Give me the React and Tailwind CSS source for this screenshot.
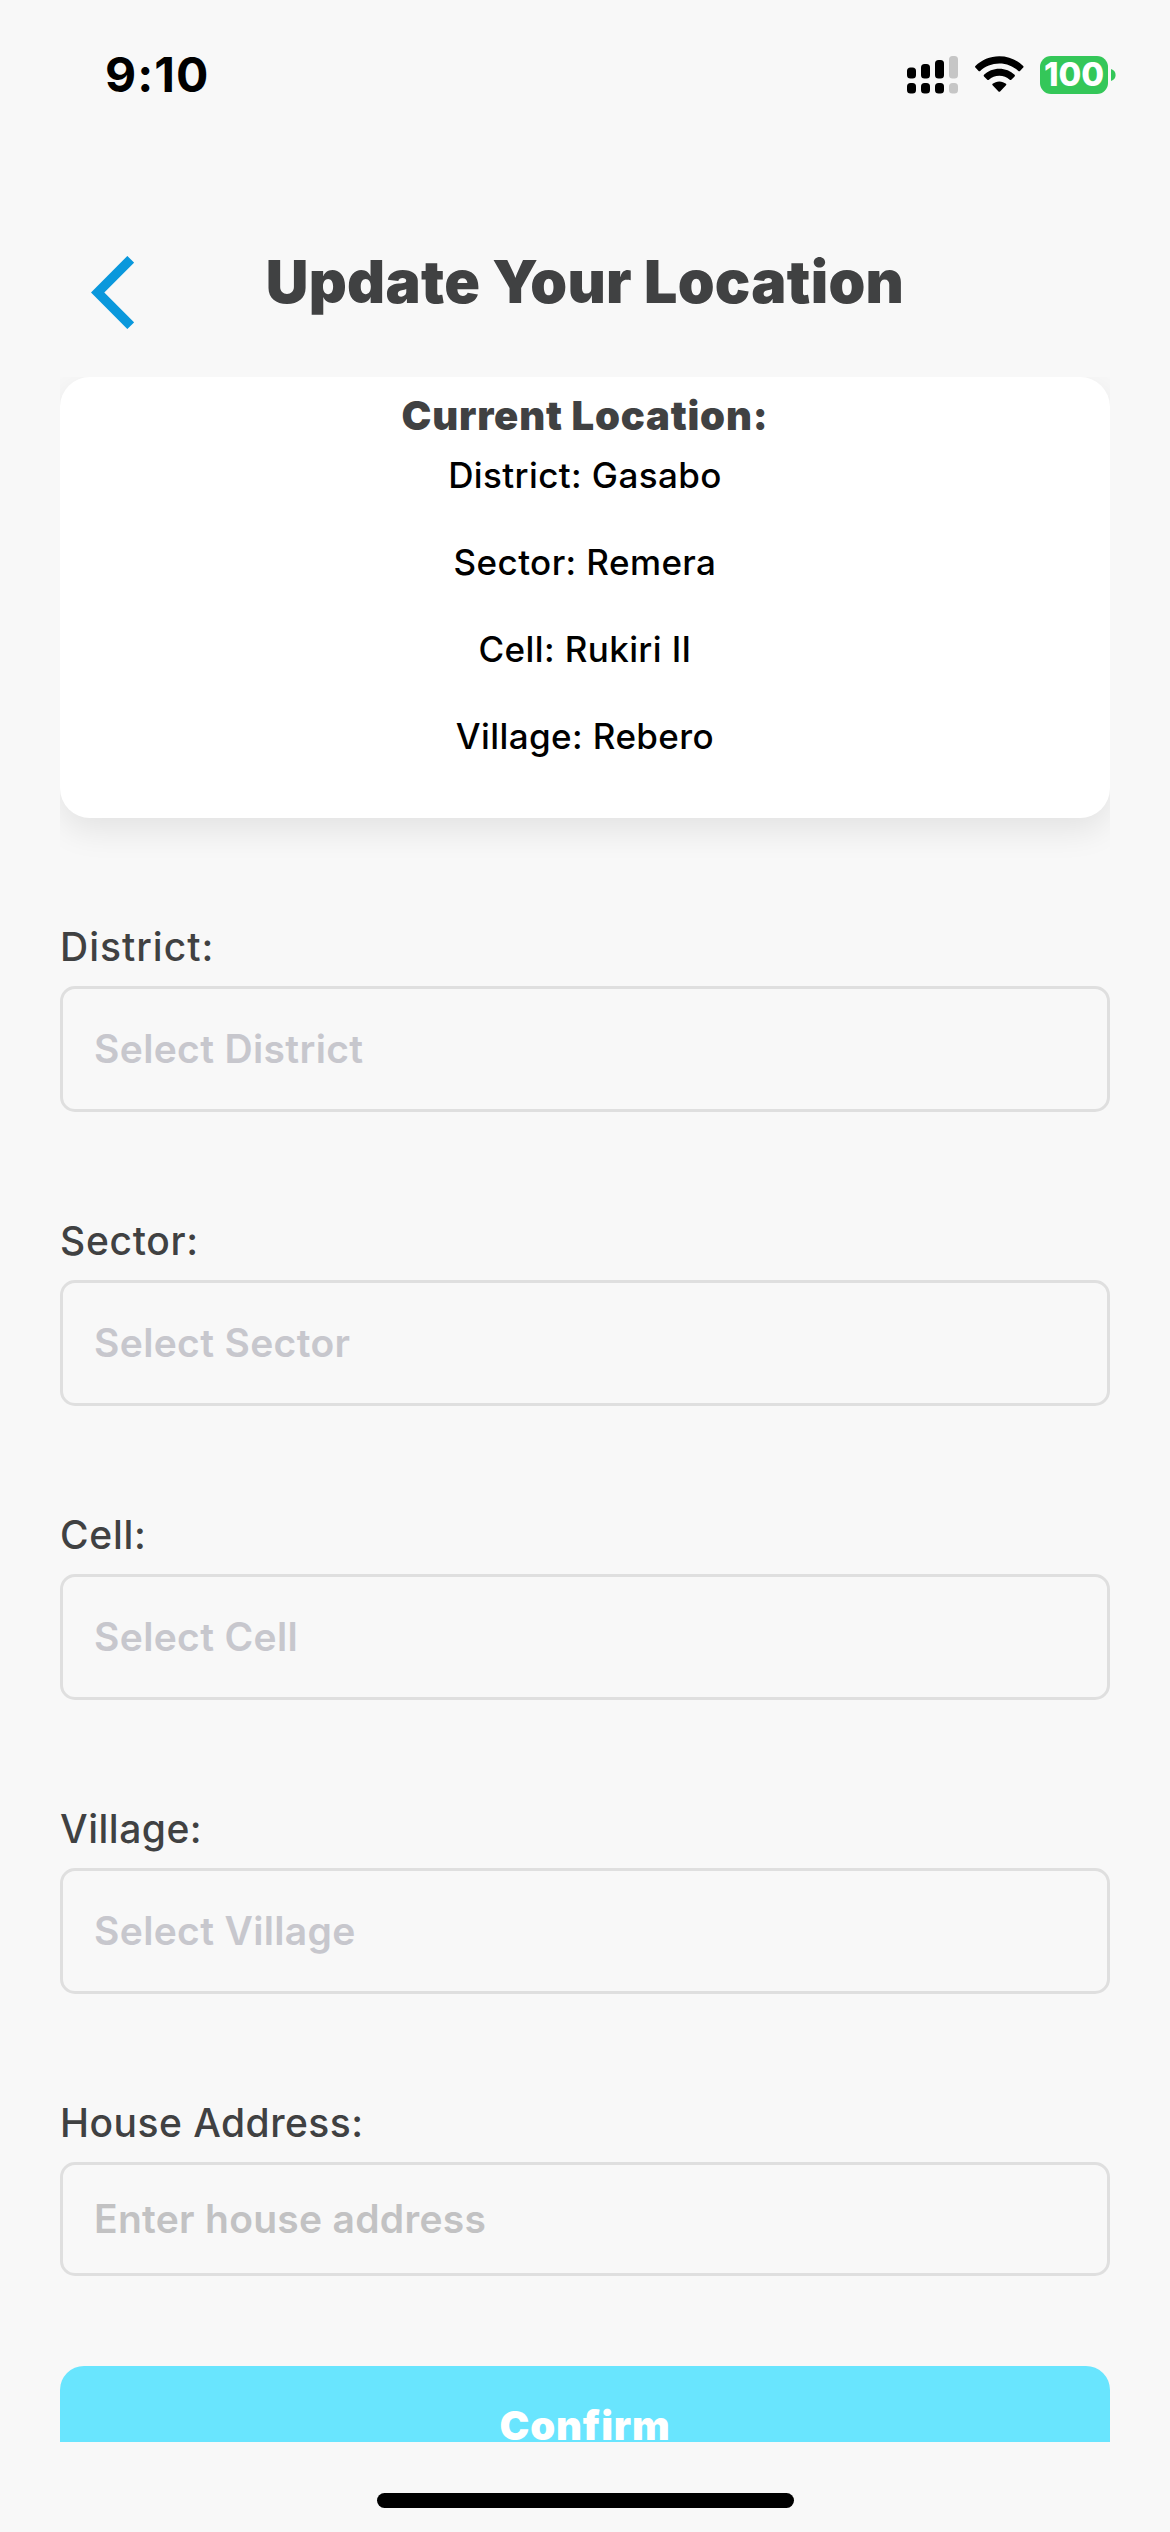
const details = ["District: Gasabo", "Sector: Remera", "Cell: Rukiri II", "Village: Rebero"];

const selects = [
  { label: "District:", placeholder: "Select District", tracking: "tracking-[1px]" },
  { label: "Sector:", placeholder: "Select Sector", tracking: "tracking-[0.7px]" },
  { label: "Cell:", placeholder: "Select Cell", tracking: "tracking-[0.7px]" },
  { label: "Village:", placeholder: "Select Village", tracking: "tracking-[0.5px]" },
];

function SignalIcon() {
  return (
    <svg width="51" height="38" viewBox="0 0 51 38" className="block">
      <g fill="#000">
        <rect x="0" y="11.5" width="9" height="11" rx="3.5" />
        <rect x="14" y="8" width="9" height="14.5" rx="3.5" />
        <rect x="28" y="4" width="9" height="18.5" rx="3.5" />
        <rect x="0" y="27" width="9" height="10.5" rx="3.5" />
        <rect x="14" y="27" width="9" height="10.5" rx="3.5" />
        <rect x="28" y="27" width="9" height="10.5" rx="3.5" />
      </g>
      <g fill="#c6c6c6">
        <rect x="42" y="0" width="9" height="22.5" rx="3.5" />
        <rect x="42" y="27" width="9" height="10.5" rx="3.5" />
      </g>
    </svg>
  );
}

function WifiIcon() {
  return (
    <svg width="49" height="37" viewBox="0 0 49 37" className="block">
      <path d="M24.3 0.2C33.6 0.2 42 3.9 48.2 9.9Q49 10.7 48.2 11.5L45 14.9Q44.2 15.7 43.4 14.9C38.4 10.2 31.7 7.4 24.3 7.4S10.2 10.2 5.2 14.9Q4.4 15.7 3.6 14.9L0.4 11.5Q-0.4 10.7 0.4 9.9C6.6 3.9 15 0.2 24.3 0.2Z" />
      <path d="M24.3 12.8C30.2 12.8 35.6 15.1 39.6 18.8Q40.4 19.6 39.6 20.4L36.3 23.7Q35.5 24.5 34.7 23.7C31.9 21.3 28.3 19.8 24.3 19.8S16.7 21.3 13.9 23.7Q13.1 24.5 12.3 23.7L9 20.4Q8.2 19.6 9 18.8C13 15.1 18.4 12.8 24.3 12.8Z" />
      <path d="M24.3 25.4C26.9 25.4 29.2 26.3 31 27.8Q31.8 28.5 31 29.3L25.1 35.4Q24.3 36.2 23.5 35.4L17.6 29.3Q16.8 28.5 17.6 27.8C19.4 26.3 21.7 25.4 24.3 25.4Z" />
    </svg>
  );
}

function Battery() {
  return (
    <div className="flex items-center gap-[3px]">
      <div className="flex h-[38px] w-[68px] items-center justify-center rounded-[11px] bg-[#34c759] text-[33px] leading-none font-extrabold text-white">
        100
      </div>
      <svg width="5" height="12" viewBox="0 0 5 12" className="block">
        <path d="M0 0C3 1 4.6 3.3 4.6 6S3 11 0 12Z" fill="#34c759" />
      </svg>
    </div>
  );
}

function StatusBar() {
  return (
    <header className="flex h-[149px] items-center justify-between pr-[54px] pl-[105px]">
      <span className="text-[48px] leading-none font-bold tracking-[1px]">9:10</span>
      <div className="flex items-center">
        <SignalIcon />
        <div className="ml-[17px]">
          <WifiIcon />
        </div>
        <div className="ml-[16px]">
          <Battery />
        </div>
      </div>
    </header>
  );
}

function Field({ label, tracking, children }) {
  return (
    <div>
      <div className={`mb-[19px] text-[39px] leading-10 font-medium text-[#404142] ${tracking}`}>{label}</div>
      {children}
    </div>
  );
}

export default function App() {
  return (
    <div className="flex h-[2532px] w-[1170px] flex-col overflow-hidden bg-[#f8f8f8] font-['Inter',sans-serif] text-black">
      <StatusBar />

      <div className="grid h-[228px] grid-cols-[208px_1fr_208px] items-start">
        <svg width="43" height="73" viewBox="0 0 43 73" className="mt-[107px] ml-[91px] block">
          <path d="M39.7 3.3L6.7 36.5L39.7 69.7" fill="none" stroke="#0a98dc" strokeWidth="9.5" />
        </svg>
        <h1 className="mt-[103px] text-center text-[59px] leading-[60px] font-black tracking-[0.3px] whitespace-nowrap text-[#404142]">
          Update Your Location
        </h1>
      </div>

      <main className="mx-[60px] h-[2065px] overflow-hidden">
        <section className="h-[441px] rounded-[30px] bg-white pt-[23px] text-center shadow-[0_12px_34px_rgba(0,0,0,0.09)]">
          <h2 className="text-[40px] leading-[32px] font-black tracking-[0.8px] text-[#404142]">Current Location:</h2>
          {details.map((line) => (
            <p key={line} className="text-[35px] leading-[87px] font-medium tracking-[0.4px]">
              {line}
            </p>
          ))}
        </section>

        <form className="mt-[109px]">
          <div className="flex flex-col gap-[109px]">
            {selects.map((field) => (
              <Field key={field.label} label={field.label} tracking={field.tracking}>
                <div className="flex h-[126px] items-center rounded-[15px] border-3 border-[#dfdfdf] pl-[31px] text-[39px] font-semibold tracking-[0.35px] text-[#c7c7cd]">
                  {field.placeholder}
                </div>
              </Field>
            ))}
            <Field label="House Address:" tracking="tracking-[0.47px]">
              <input
                type="text"
                placeholder="Enter house address"
                className="block h-[114px] w-full rounded-[15px] border-3 border-[#dfdfdf] pb-0.5 pl-[31px] text-[39px] font-semibold tracking-[0.29px] placeholder:text-[#c2c2c3]"
              />
            </Field>
          </div>
          <button
            type="button"
            className="mt-[90px] flex h-[76px] w-full items-end justify-center rounded-t-3xl bg-[#69e5fe] text-[40px] leading-[32px] font-black tracking-[0.8px] text-white"
          >
            Confirm
          </button>
        </form>
      </main>

      <div className="mt-[51px] h-[15px] w-[417px] self-center rounded-full bg-black" />
    </div>
  );
}
